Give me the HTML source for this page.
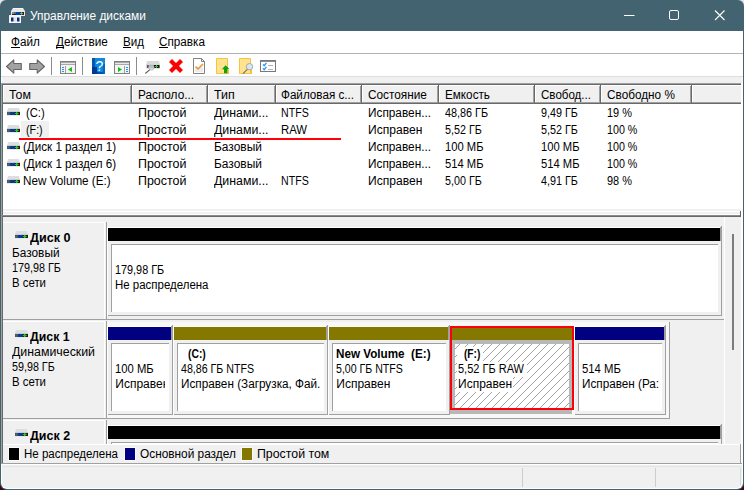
<!DOCTYPE html>
<html lang="ru"><head><meta charset="utf-8"><title>Управление дисками</title>
<style>
html,body{margin:0;padding:0}
body{width:744px;height:490px;overflow:hidden;position:relative;background:#fff;font-family:"Liberation Sans", sans-serif;font-size:12px}
#w{position:absolute;left:0;top:0;width:744px;height:490px;overflow:hidden}
#w>div,#w>svg{position:absolute;display:block}
.t{font-family:"Liberation Sans", sans-serif;font-size:12px;height:14px;line-height:14px;white-space:pre;transform-origin:0 0}
.c{height:14px;overflow:hidden}
u{text-decoration:underline;text-underline-offset:1px}
</style></head><body><div id="w">
<div style="left:0;top:0;width:744px;height:40px;background:#e4e4e4"></div>
<div style="left:0;top:450px;width:744px;height:40px;background:#3a0610"></div>
<div style="left:0;top:0;width:744px;height:490px;background:#446370;border-radius:6px 6px 7px 7px"></div>
<div style="left:1px;top:31px;width:742px;height:458px;background:#fff;border-radius:0 0 6px 6px;"></div>
<div style="left:2px;top:77px;width:740px;height:411px;background:#f0f0f0;border-radius:0 0 5px 5px;"></div>
<svg style="left:9px;top:8px" width="16" height="15" viewBox="0 0 16 15">
<path d="M4 0h10l2 3v5H2V3z" fill="#e4e6e8"/>
<rect x="4" y="0" width="10" height="1" fill="#f4f4f4"/>
<rect x="3" y="4" width="12" height="3" fill="#5a0c14"/>
<rect x="3" y="4" width="2" height="2" fill="#8c8c90"/>
<rect x="5" y="4" width="2" height="2" fill="#2a7c94"/>
<rect x="7" y="4" width="4" height="3" fill="#0a44a0"/>
<rect x="11.500" y="4.500" width="2" height="2" fill="#30e8a0" transform="rotate(45 12.500 5.500)"/>
<rect x="0" y="7" width="12" height="8" rx="0.500" fill="#f4f5f6"/>
<rect x="2" y="9.500" width="2.500" height="4" fill="#0c2c8c"/>
<rect x="8" y="9.500" width="2.500" height="4" fill="#0c2c8c"/>
<rect x="5" y="9" width="2.500" height="5" fill="#e4e4e4"/>
</svg>
<div class="t" style="left:30.00px;top:9px;color:#fff;transform:scaleX(0.9907);">Управление дисками</div>
<svg style="left:600px;top:0" width="144" height="31" viewBox="600 0 144 31">
<path d="M624 15.500h10.500" stroke="#fff" stroke-width="1" fill="none"/>
<rect x="669.500" y="10.500" width="9" height="9" rx="1.500" stroke="#fff" stroke-width="1" fill="none"/>
<path d="M715 10.500l9.500 9.500M724.500 10.500l-9.500 9.500" stroke="#fff" stroke-width="1.100" fill="none"/>
</svg>
<div style="left:1px;top:31px;width:742px;height:22px;background:#fff;"></div>
<div class="t" style="left:11.20px;top:35px;color:#000;transform:scaleX(0.9763);">Файл</div>
<div style="left:11.20px;top:47px;width:8.91px;height:1px;background:#000"></div>
<div class="t" style="left:55.80px;top:35px;color:#000;transform:scaleX(0.9816);">Действие</div>
<div style="left:55.80px;top:47px;width:7.98px;height:1px;background:#000"></div>
<div class="t" style="left:122.90px;top:35px;color:#000;transform:scaleX(0.9674);">Вид</div>
<div style="left:122.90px;top:47px;width:7.74px;height:1px;background:#000"></div>
<div class="t" style="left:159.40px;top:35px;color:#000;transform:scaleX(0.9768);">Справка</div>
<div style="left:159.40px;top:47px;width:8.46px;height:1px;background:#000"></div>
<div style="left:1px;top:53px;width:742px;height:1px;background:#b4b4b4;"></div>
<div style="left:1px;top:54px;width:742px;height:22px;background:#fff;"></div>
<div style="left:1px;top:76px;width:742px;height:1px;background:#dcdfdf;"></div>
<div style="left:51px;top:57px;width:1px;height:18px;background:#8c8c8c;"></div>
<div style="left:82px;top:57px;width:1px;height:18px;background:#8c8c8c;"></div>
<div style="left:136px;top:57px;width:1px;height:18px;background:#8c8c8c;"></div>
<svg style="left:0;top:54px" width="290" height="24" viewBox="0 54 290 24">
<!-- back / forward arrows -->
<path d="M6.500 66.500l7.300-6.700v3.700h7.500v6h-7.500v3.700z" fill="#a2a2a2" stroke="#686262" stroke-width="1.050" stroke-linejoin="round"/>
<path d="M44.500 66.500l-7.300-6.700v3.700h-7.500v6h7.500v3.700z" fill="#a2a2a2" stroke="#686262" stroke-width="1.050" stroke-linejoin="round"/>
<!-- show/hide tree -->
<rect x="60.500" y="61.500" width="15" height="12" fill="#f4f4f4" stroke="#808080"/>
<rect x="61" y="62" width="14" height="3" fill="#a8a8a8"/><rect x="61" y="63" width="14" height="1" fill="#e8e8e8"/>
<rect x="65" y="66" width="1" height="7" fill="#a0a0a0"/>
<rect x="62" y="67" width="2" height="1" fill="#1e90ff"/><rect x="62" y="69" width="2" height="1" fill="#1e90ff"/><rect x="62" y="71" width="2" height="1" fill="#1e90ff"/>
<path d="M72 67v5l-4-2.500z" fill="#10c010"/>
<!-- help -->
<rect x="92" y="58" width="13" height="16" fill="#0c8ae0"/>
<rect x="92" y="58" width="3" height="16" fill="#0458b0"/>
<rect x="92" y="67" width="5" height="7" fill="#003a8c"/><rect x="97" y="72" width="8" height="2" fill="#0050a8"/><rect x="103" y="64" width="2" height="10" fill="#0068c0"/>
<text x="99.500" y="71" font-family="Liberation Sans, sans-serif" font-size="14" fill="#fff" text-anchor="middle">?</text>
<!-- tree right -->
<rect x="114.500" y="61.500" width="15" height="12" fill="#f4f4f4" stroke="#808080"/>
<rect x="115" y="62" width="14" height="3" fill="#a8a8a8"/><rect x="115" y="63" width="14" height="1" fill="#e8e8e8"/>
<rect x="124" y="66" width="1" height="7" fill="#a0a0a0"/>
<rect x="126" y="67" width="2" height="1" fill="#1e90ff"/><rect x="126" y="69" width="2" height="1" fill="#1e90ff"/><rect x="126" y="71" width="2" height="1" fill="#1e90ff"/>
<path d="M118 67v5l4-2.500z" fill="#10c010"/>
<!-- disk with magnifier -->
<path d="M147 61h12l1 4h-14z" fill="#d8dadc"/>
<rect x="146" y="64.500" width="14" height="4" fill="#d0d2d4"/>
<rect x="147" y="65" width="12.500" height="3" fill="#2a0c14"/>
<rect x="147" y="65" width="1.500" height="3" fill="#605858"/>
<rect x="148.500" y="65" width="2" height="3" fill="#a8b0b8"/>
<rect x="150.500" y="65" width="3.500" height="3" fill="#4a7c94"/>
<rect x="156" y="65" width="1" height="3" fill="#10e020"/><rect x="155" y="66" width="3" height="1" fill="#10e020"/>
<circle cx="151.500" cy="67.500" r="2.600" fill="#d0d4d8" fill-opacity="0.800" stroke="#b0b4b8" stroke-width="0.700"/>
<path d="M149.800 69.600L145.300 73.500" stroke="#686060" stroke-width="1.200"/>
<!-- red X -->
<path d="M170.500 60.500l11 11M181.500 60.500l-11 11" stroke="#ff0000" stroke-width="4.200"/>
<!-- doc check -->
<path d="M193.500 58.500h8l3 3v12h-11z" fill="#fff" stroke="#808080"/>
<rect x="195" y="67" width="8" height="5" fill="#ececec"/>
<path d="M201.500 58.500v3h3" fill="none" stroke="#808080"/>
<path d="M195.500 66.500l2.500 2.500l5-5" stroke="#f09030" stroke-width="1.500" fill="none"/>
<!-- yellow + green arrow -->
<path d="M216.500 58.500h11v15h-11z" fill="#ffe38e" stroke="#f7c23c"/>
<rect x="227" y="70" width="2" height="4" fill="#f7c23c"/>
<path d="M225.700 65.300l3.800 4h-2.200v4h-3.300v-4h-2.200z" fill="#10a010"/>
<!-- yellow + magnifier -->
<path d="M239.500 58.500h11v15h-11z" fill="#ffe38e" stroke="#f7c23c"/>
<rect x="250" y="70" width="2" height="4" fill="#f7c23c"/>
<circle cx="249.500" cy="66.700" r="3.200" fill="#d8e6f0" stroke="#a8a8a8" stroke-width="1"/>
<path d="M247.300 69.300l-4.300 4.400" stroke="#7a7068" stroke-width="1.200"/>
<!-- list check -->
<rect x="260.500" y="60.500" width="15" height="11" fill="#fff" stroke="#787878"/>
<rect x="261" y="61" width="14" height="1" fill="#8c8c8c"/>
<path d="M263 64.300l1.200 1.400l2.200-2.800M263 68.300l1.200 1.400l2.200-2.800" stroke="#1e90ff" stroke-width="1.300" fill="none"/>
<path d="M268 65.500h5M268 69.500h5" stroke="#b0b4b8"/>
</svg>
<div style="left:3px;top:85px;width:738px;height:130px;background:#fff;"></div>
<div style="left:1px;top:83px;width:740px;height:1px;background:#a0a0a0;"></div>
<div style="left:1px;top:83px;width:1px;height:381px;background:#a0a0a0;"></div>
<div style="left:2px;top:84px;width:739px;height:1px;background:#696969;"></div>
<div style="left:2px;top:84px;width:1px;height:380px;background:#696969;"></div>
<div style="left:741px;top:83px;width:1px;height:381px;background:#fff;"></div>
<div style="left:3px;top:85px;width:738px;height:17px;background:#f0f0f0;"></div>
<div style="left:3px;top:85px;width:738px;height:1px;background:#fff;"></div>
<div style="left:3px;top:102px;width:738px;height:1px;background:#a0a0a0;"></div>
<div style="left:3px;top:103px;width:738px;height:1px;background:#696969;"></div>
<div style="left:3px;top:85px;width:1px;height:17px;background:#fff;"></div>
<div style="left:130px;top:86px;width:1px;height:17px;background:#a0a0a0;"></div>
<div style="left:131px;top:85px;width:1px;height:19px;background:#696969;"></div>
<div style="left:132px;top:85px;width:1px;height:17px;background:#fff;"></div>
<div style="left:206px;top:86px;width:1px;height:17px;background:#a0a0a0;"></div>
<div style="left:207px;top:85px;width:1px;height:19px;background:#696969;"></div>
<div style="left:208px;top:85px;width:1px;height:17px;background:#fff;"></div>
<div style="left:274px;top:86px;width:1px;height:17px;background:#a0a0a0;"></div>
<div style="left:275px;top:85px;width:1px;height:19px;background:#696969;"></div>
<div style="left:276px;top:85px;width:1px;height:17px;background:#fff;"></div>
<div style="left:360px;top:86px;width:1px;height:17px;background:#a0a0a0;"></div>
<div style="left:361px;top:85px;width:1px;height:19px;background:#696969;"></div>
<div style="left:362px;top:85px;width:1px;height:17px;background:#fff;"></div>
<div style="left:437px;top:86px;width:1px;height:17px;background:#a0a0a0;"></div>
<div style="left:438px;top:85px;width:1px;height:19px;background:#696969;"></div>
<div style="left:439px;top:85px;width:1px;height:17px;background:#fff;"></div>
<div style="left:533px;top:86px;width:1px;height:17px;background:#a0a0a0;"></div>
<div style="left:534px;top:85px;width:1px;height:19px;background:#696969;"></div>
<div style="left:535px;top:85px;width:1px;height:17px;background:#fff;"></div>
<div style="left:599px;top:86px;width:1px;height:17px;background:#a0a0a0;"></div>
<div style="left:600px;top:85px;width:1px;height:19px;background:#696969;"></div>
<div style="left:601px;top:85px;width:1px;height:17px;background:#fff;"></div>
<div style="left:690px;top:86px;width:1px;height:17px;background:#a0a0a0;"></div>
<div style="left:691px;top:85px;width:1px;height:19px;background:#696969;"></div>
<div style="left:692px;top:85px;width:1px;height:17px;background:#fff;"></div>
<div class="t" style="left:9.30px;top:88px;color:#000;transform:scaleX(1.0301);">Том</div>
<div class="t" style="left:137.80px;top:88px;color:#000;transform:scaleX(0.9830);">Располо...</div>
<div class="t" style="left:213.80px;top:88px;color:#000;transform:scaleX(1.0356);">Тип</div>
<div class="t" style="left:281.30px;top:88px;color:#000;transform:scaleX(0.9729);">Файловая с...</div>
<div class="t" style="left:367.80px;top:88px;color:#000;transform:scaleX(0.9833);">Состояние</div>
<div class="t" style="left:444.80px;top:88px;color:#000;transform:scaleX(0.9758);">Емкость</div>
<div class="t" style="left:540.80px;top:88px;color:#000;transform:scaleX(0.9644);">Свобод...</div>
<div class="t" style="left:606.80px;top:88px;color:#000;transform:scaleX(0.9813);">Свободно %</div>
<div style="left:21px;top:121px;width:28px;height:16px;background:#f0f0f0;"></div>
<svg style="left:6.5px;top:108px" width="13" height="8" viewBox="0 0 13 8">
<path d="M1 0h11l1 4H0z" fill="#dcdee0"/><rect x="0" y="3" width="13" height="1" fill="#c8ccd0"/>
<rect x="0" y="4" width="13" height="3" fill="#063c8c"/><rect x="0" y="4" width="3" height="3" fill="#4a5a74"/><rect x="8" y="4" width="5" height="3" fill="#34141c"/>
<rect x="9" y="4" width="1.500" height="3" fill="#18d018"/><rect x="8" y="5" width="3.500" height="1" fill="#18d018"/>
<rect x="0" y="7" width="13" height="1" fill="#e6e8ea"/></svg>
<div class="t" style="left:25.80px;top:106px;color:#000;transform:scaleX(0.9352);">(C:)</div>
<div class="t" style="left:137.80px;top:106px;color:#000;transform:scaleX(1.0368);">Простой</div>
<div class="t" style="left:213.80px;top:106px;color:#000;transform:scaleX(1.0275);">Динами...</div>
<div class="t" style="left:281.30px;top:106px;color:#000;transform:scaleX(0.8842);">NTFS</div>
<div class="t" style="left:367.80px;top:106px;color:#000;transform:scaleX(0.9846);">Исправен...</div>
<div class="t" style="left:444.80px;top:106px;color:#000;transform:scaleX(0.9026);">48,86 ГБ</div>
<div class="t" style="left:540.80px;top:106px;color:#000;transform:scaleX(0.8959);">9,49 ГБ</div>
<div class="t" style="left:606.80px;top:106px;color:#000;transform:scaleX(0.9104);">19 %</div>
<svg style="left:6.5px;top:125px" width="13" height="8" viewBox="0 0 13 8">
<path d="M1 0h11l1 4H0z" fill="#dcdee0"/><rect x="0" y="3" width="13" height="1" fill="#c8ccd0"/>
<rect x="0" y="4" width="13" height="3" fill="#063c8c"/><rect x="0" y="4" width="3" height="3" fill="#4a5a74"/><rect x="8" y="4" width="5" height="3" fill="#34141c"/>
<rect x="9" y="4" width="1.500" height="3" fill="#18d018"/><rect x="8" y="5" width="3.500" height="1" fill="#18d018"/>
<rect x="0" y="7" width="13" height="1" fill="#e6e8ea"/></svg>
<div class="t" style="left:25.80px;top:123px;color:#000;transform:scaleX(0.8950);">(F:)</div>
<div class="t" style="left:137.80px;top:123px;color:#000;transform:scaleX(1.0368);">Простой</div>
<div class="t" style="left:213.80px;top:123px;color:#000;transform:scaleX(1.0275);">Динами...</div>
<div class="t" style="left:281.30px;top:123px;color:#000;transform:scaleX(0.9460);">RAW</div>
<div class="t" style="left:367.80px;top:123px;color:#000;transform:scaleX(1.0059);">Исправен</div>
<div class="t" style="left:444.80px;top:123px;color:#000;transform:scaleX(0.8959);">5,52 ГБ</div>
<div class="t" style="left:540.80px;top:123px;color:#000;transform:scaleX(0.8959);">5,52 ГБ</div>
<div class="t" style="left:606.80px;top:123px;color:#000;transform:scaleX(0.8936);">100 %</div>
<svg style="left:6.5px;top:142px" width="13" height="8" viewBox="0 0 13 8">
<path d="M1 0h11l1 4H0z" fill="#dcdee0"/><rect x="0" y="3" width="13" height="1" fill="#c8ccd0"/>
<rect x="0" y="4" width="13" height="3" fill="#063c8c"/><rect x="0" y="4" width="3" height="3" fill="#4a5a74"/><rect x="8" y="4" width="5" height="3" fill="#34141c"/>
<rect x="9" y="4" width="1.500" height="3" fill="#18d018"/><rect x="8" y="5" width="3.500" height="1" fill="#18d018"/>
<rect x="0" y="7" width="13" height="1" fill="#e6e8ea"/></svg>
<div class="t" style="left:22.80px;top:140px;color:#000;transform:scaleX(0.9693);">(Диск 1 раздел 1)</div>
<div class="t" style="left:137.80px;top:140px;color:#000;transform:scaleX(1.0368);">Простой</div>
<div class="t" style="left:213.80px;top:140px;color:#000;transform:scaleX(0.9946);">Базовый</div>
<div class="t" style="left:367.80px;top:140px;color:#000;transform:scaleX(0.9846);">Исправен...</div>
<div class="t" style="left:444.80px;top:140px;color:#000;transform:scaleX(0.9359);">100 МБ</div>
<div class="t" style="left:540.80px;top:140px;color:#000;transform:scaleX(0.9359);">100 МБ</div>
<div class="t" style="left:606.80px;top:140px;color:#000;transform:scaleX(0.8936);">100 %</div>
<svg style="left:6.5px;top:159px" width="13" height="8" viewBox="0 0 13 8">
<path d="M1 0h11l1 4H0z" fill="#dcdee0"/><rect x="0" y="3" width="13" height="1" fill="#c8ccd0"/>
<rect x="0" y="4" width="13" height="3" fill="#063c8c"/><rect x="0" y="4" width="3" height="3" fill="#4a5a74"/><rect x="8" y="4" width="5" height="3" fill="#34141c"/>
<rect x="9" y="4" width="1.500" height="3" fill="#18d018"/><rect x="8" y="5" width="3.500" height="1" fill="#18d018"/>
<rect x="0" y="7" width="13" height="1" fill="#e6e8ea"/></svg>
<div class="t" style="left:22.80px;top:157px;color:#000;transform:scaleX(0.9693);">(Диск 1 раздел 6)</div>
<div class="t" style="left:137.80px;top:157px;color:#000;transform:scaleX(1.0368);">Простой</div>
<div class="t" style="left:213.80px;top:157px;color:#000;transform:scaleX(0.9946);">Базовый</div>
<div class="t" style="left:367.80px;top:157px;color:#000;transform:scaleX(0.9846);">Исправен...</div>
<div class="t" style="left:444.80px;top:157px;color:#000;transform:scaleX(0.9359);">514 МБ</div>
<div class="t" style="left:540.80px;top:157px;color:#000;transform:scaleX(0.9359);">514 МБ</div>
<div class="t" style="left:606.80px;top:157px;color:#000;transform:scaleX(0.8936);">100 %</div>
<svg style="left:6.5px;top:176px" width="13" height="8" viewBox="0 0 13 8">
<path d="M1 0h11l1 4H0z" fill="#dcdee0"/><rect x="0" y="3" width="13" height="1" fill="#c8ccd0"/>
<rect x="0" y="4" width="13" height="3" fill="#063c8c"/><rect x="0" y="4" width="3" height="3" fill="#4a5a74"/><rect x="8" y="4" width="5" height="3" fill="#34141c"/>
<rect x="9" y="4" width="1.500" height="3" fill="#18d018"/><rect x="8" y="5" width="3.500" height="1" fill="#18d018"/>
<rect x="0" y="7" width="13" height="1" fill="#e6e8ea"/></svg>
<div class="t" style="left:22.80px;top:174px;color:#000;transform:scaleX(0.9741);">New Volume (E:)</div>
<div class="t" style="left:137.80px;top:174px;color:#000;transform:scaleX(1.0368);">Простой</div>
<div class="t" style="left:213.80px;top:174px;color:#000;transform:scaleX(1.0275);">Динами...</div>
<div class="t" style="left:281.30px;top:174px;color:#000;transform:scaleX(0.8842);">NTFS</div>
<div class="t" style="left:367.80px;top:174px;color:#000;transform:scaleX(1.0059);">Исправен</div>
<div class="t" style="left:444.80px;top:174px;color:#000;transform:scaleX(0.8959);">5,00 ГБ</div>
<div class="t" style="left:540.80px;top:174px;color:#000;transform:scaleX(0.8959);">4,91 ГБ</div>
<div class="t" style="left:606.80px;top:174px;color:#000;transform:scaleX(0.9104);">98 %</div>
<div style="left:19px;top:138px;width:322px;height:2px;background:#ff0008;"></div>
<div style="left:3px;top:209px;width:738px;height:6px;background:#f0f0f0;"></div>
<div style="left:3px;top:211px;width:738px;height:1px;background:#fff;"></div>
<div style="left:3px;top:214px;width:738px;height:1px;background:#fff;"></div>
<div style="left:1px;top:215px;width:740px;height:1px;background:#8e8a8a;"></div>
<div style="left:2px;top:216px;width:739px;height:1px;background:#696969;"></div>
<div style="left:740px;top:211px;width:1px;height:6px;background:#696969;"></div>
<div style="left:3px;top:222px;width:101px;height:1px;background:#fff;"></div>
<div style="left:104px;top:222px;width:1px;height:97px;background:#fff;"></div>
<div style="left:106px;top:222px;width:1px;height:98px;background:#a0a0a0;"></div>
<div style="left:3px;top:319px;width:721px;height:1px;background:#a0a0a0;"></div>
<svg style="left:14.5px;top:231px" width="13" height="8" viewBox="0 0 13 8">
<path d="M1 0h11l1 4H0z" fill="#dcdee0"/><rect x="0" y="3" width="13" height="1" fill="#c8ccd0"/>
<rect x="0" y="4" width="13" height="3" fill="#063c8c"/><rect x="0" y="4" width="3" height="3" fill="#4a5a74"/><rect x="8" y="4" width="5" height="3" fill="#34141c"/>
<rect x="9" y="4" width="1.500" height="3" fill="#18d018"/><rect x="8" y="5" width="3.500" height="1" fill="#18d018"/>
<rect x="0" y="7" width="13" height="1" fill="#e6e8ea"/></svg>
<div class="t" style="left:30.00px;top:231px;color:#000;font-weight:bold;transform:scaleX(1.0503);">Диск 0</div>
<div class="t" style="left:12.30px;top:246px;color:#000;transform:scaleX(0.9862);">Базовый</div>
<div class="t" style="left:12.30px;top:261px;color:#000;transform:scaleX(0.8985);">179,98 ГБ</div>
<div class="t" style="left:12.30px;top:276px;color:#000;transform:scaleX(0.9485);">В сети</div>
<div style="left:107px;top:227px;width:614px;height:89px;background:#fff;"></div>
<div style="left:108px;top:241px;width:613px;height:74px;background:#f0f0f0;"></div>
<div style="left:108px;top:228px;width:612px;height:13px;background:#000;"></div>
<div style="left:720px;top:227px;width:1px;height:14px;background:#a0a0a0;"></div>
<div style="left:721px;top:226px;width:1px;height:90px;background:#a0a0a0;"></div>
<div style="left:108px;top:315px;width:614px;height:1px;background:#a0a0a0;"></div>
<div style="left:112px;top:245px;width:606px;height:67px;background:#fff;"></div>
<div style="left:111px;top:244px;width:607px;height:1px;background:#a0a0a0;"></div>
<div style="left:111px;top:244px;width:1px;height:68px;background:#a0a0a0;"></div>
<div class="t" style="left:115.30px;top:263px;color:#000;transform:scaleX(0.9040);">179,98 ГБ</div>
<div class="t" style="left:115.30px;top:278px;color:#000;transform:scaleX(0.9554);">Не распределена</div>
<div style="left:3px;top:321px;width:101px;height:1px;background:#fff;"></div>
<div style="left:104px;top:321px;width:1px;height:97px;background:#fff;"></div>
<div style="left:106px;top:321px;width:1px;height:98px;background:#a0a0a0;"></div>
<div style="left:3px;top:418px;width:667px;height:1px;background:#a0a0a0;"></div>
<div style="left:669px;top:322px;width:1px;height:97px;background:#a0a0a0;"></div>
<div style="left:107px;top:322px;width:562px;height:96px;background:#f8f8f8;"></div>
<svg style="left:14.5px;top:330px" width="13" height="8" viewBox="0 0 13 8">
<path d="M1 0h11l1 4H0z" fill="#dcdee0"/><rect x="0" y="3" width="13" height="1" fill="#c8ccd0"/>
<rect x="0" y="4" width="13" height="3" fill="#063c8c"/><rect x="0" y="4" width="3" height="3" fill="#4a5a74"/><rect x="8" y="4" width="5" height="3" fill="#34141c"/>
<rect x="9" y="4" width="1.500" height="3" fill="#18d018"/><rect x="8" y="5" width="3.500" height="1" fill="#18d018"/>
<rect x="0" y="7" width="13" height="1" fill="#e6e8ea"/></svg>
<div class="t" style="left:30.00px;top:330px;color:#000;font-weight:bold;transform:scaleX(1.0247);">Диск 1</div>
<div class="t" style="left:12.30px;top:345px;color:#000;transform:scaleX(1.0292);">Динамический</div>
<div class="t" style="left:12.30px;top:360px;color:#000;transform:scaleX(0.8943);">59,98 ГБ</div>
<div class="t" style="left:12.30px;top:375px;color:#000;transform:scaleX(0.9485);">В сети</div>
<div style="left:107px;top:326px;width:65px;height:89px;background:#fff;"></div>
<div style="left:108px;top:340px;width:64px;height:74px;background:#f0f0f0;"></div>
<div style="left:108px;top:327px;width:63px;height:13px;background:#000080;"></div>
<div style="left:171px;top:326px;width:1px;height:14px;background:#a0a0a0;"></div>
<div style="left:172px;top:325px;width:1px;height:90px;background:#a0a0a0;"></div>
<div style="left:108px;top:414px;width:65px;height:1px;background:#a0a0a0;"></div>
<div style="left:112px;top:344px;width:57px;height:67px;background:#fff;"></div>
<div style="left:111px;top:343px;width:58px;height:1px;background:#a0a0a0;"></div>
<div style="left:111px;top:343px;width:1px;height:68px;background:#a0a0a0;"></div>
<div class="c" style="left:115.30px;top:362px;width:49.70px"><div class="t" style="position:relative;left:0;top:0;color:#000;transform:scaleX(0.9383);">100 МБ</div></div>
<div class="c" style="left:115.30px;top:377px;width:49.70px"><div class="t" style="position:relative;left:0;top:0;color:#000;">Исправен</div></div>
<div style="left:173px;top:326px;width:154px;height:89px;background:#fff;"></div>
<div style="left:174px;top:340px;width:153px;height:74px;background:#f0f0f0;"></div>
<div style="left:174px;top:327px;width:152px;height:13px;background:#857800;"></div>
<div style="left:326px;top:326px;width:1px;height:14px;background:#a0a0a0;"></div>
<div style="left:327px;top:325px;width:1px;height:90px;background:#a0a0a0;"></div>
<div style="left:174px;top:414px;width:154px;height:1px;background:#a0a0a0;"></div>
<div style="left:178px;top:344px;width:146px;height:67px;background:#fff;"></div>
<div style="left:177px;top:343px;width:147px;height:1px;background:#a0a0a0;"></div>
<div style="left:177px;top:343px;width:1px;height:68px;background:#a0a0a0;"></div>
<div class="t" style="left:188.00px;top:347px;color:#000;font-weight:bold;transform:scaleX(0.8616);">(C:)</div>
<div class="t" style="left:181.05px;top:362px;color:#000;transform:scaleX(0.8866);">48,86 ГБ NTFS</div>
<div class="t" style="left:181.05px;top:377px;color:#000;transform:scaleX(0.9790);">Исправен (Загрузка, Фай.</div>
<div style="left:328px;top:326px;width:121px;height:89px;background:#fff;"></div>
<div style="left:329px;top:340px;width:120px;height:74px;background:#f0f0f0;"></div>
<div style="left:329px;top:327px;width:119px;height:13px;background:#857800;"></div>
<div style="left:448px;top:326px;width:1px;height:14px;background:#a0a0a0;"></div>
<div style="left:449px;top:325px;width:1px;height:90px;background:#a0a0a0;"></div>
<div style="left:329px;top:414px;width:121px;height:1px;background:#a0a0a0;"></div>
<div style="left:333px;top:344px;width:113px;height:67px;background:#fff;"></div>
<div style="left:332px;top:343px;width:114px;height:1px;background:#a0a0a0;"></div>
<div style="left:332px;top:343px;width:1px;height:68px;background:#a0a0a0;"></div>
<div class="t" style="left:336.30px;top:347px;color:#000;font-weight:bold;transform:scaleX(0.9735);">New Volume &nbsp;(E:)</div>
<div class="t" style="left:336.30px;top:362px;color:#000;transform:scaleX(0.8822);">5,00 ГБ NTFS</div>
<div class="t" style="left:336.30px;top:377px;color:#000;">Исправен</div>
<div style="left:450px;top:326px;width:124px;height:88px;background:#b8b8b8;"></div>
<div style="left:572px;top:410px;width:2px;height:4px;background:#fff;"></div>
<div style="left:452px;top:328px;width:120px;height:12px;background:#857800;"></div>
<svg style="left:455px;top:344px" width="114" height="64" viewBox="455 344 114 64"><defs><pattern id="hb" width="8" height="8" patternUnits="userSpaceOnUse"><path d="M-1 5L5 -1M3 9L9 3" stroke="#8c8c8c" stroke-width="0.800" fill="none"/></pattern></defs><rect x="455" y="344" width="114" height="64" fill="#fff"/><rect x="455" y="344" width="114" height="64" fill="url(#hb)"/></svg>
<div style="left:457px;top:347px;width:25.5px;height:15px;background:#fff;"></div>
<div style="left:457px;top:362px;width:69.5px;height:15px;background:#fff;"></div>
<div style="left:457px;top:377px;width:56.25px;height:15px;background:#fff;"></div>
<div style="left:450px;top:326px;width:124px;height:84px;border:2px solid #ff0008;box-sizing:border-box;z-index:3"></div>
<div class="t" style="left:464.30px;top:347px;color:#000;font-weight:bold;transform:scaleX(0.8436);">(F:)</div>
<div class="t" style="left:458.05px;top:362px;color:#000;transform:scaleX(0.9164);">5,52 ГБ RAW</div>
<div class="t" style="left:458.05px;top:377px;color:#000;">Исправен</div>
<div style="left:574px;top:326px;width:91px;height:89px;background:#fff;"></div>
<div style="left:575px;top:340px;width:90px;height:74px;background:#f0f0f0;"></div>
<div style="left:575px;top:327px;width:89px;height:13px;background:#000080;"></div>
<div style="left:664px;top:326px;width:1px;height:14px;background:#a0a0a0;"></div>
<div style="left:665px;top:325px;width:1px;height:90px;background:#a0a0a0;"></div>
<div style="left:575px;top:414px;width:91px;height:1px;background:#a0a0a0;"></div>
<div style="left:579px;top:344px;width:83px;height:67px;background:#fff;"></div>
<div style="left:578px;top:343px;width:84px;height:1px;background:#a0a0a0;"></div>
<div style="left:578px;top:343px;width:1px;height:68px;background:#a0a0a0;"></div>
<div class="c" style="left:582.30px;top:362px;width:76.70px"><div class="t" style="position:relative;left:0;top:0;color:#000;transform:scaleX(0.9431);">514 МБ</div></div>
<div class="c" style="left:582.30px;top:377px;width:76.70px"><div class="t" style="position:relative;left:0;top:0;color:#000;transform:scaleX(0.9768);">Исправен (Ра:</div></div>
<div style="left:3px;top:420px;width:101px;height:1px;background:#fff;"></div>
<div style="left:104px;top:420px;width:1px;height:24px;background:#fff;"></div>
<div style="left:106px;top:420px;width:1px;height:24px;background:#a0a0a0;"></div>
<svg style="left:14.5px;top:429px" width="13" height="8" viewBox="0 0 13 8">
<path d="M1 0h11l1 4H0z" fill="#dcdee0"/><rect x="0" y="3" width="13" height="1" fill="#c8ccd0"/>
<rect x="0" y="4" width="13" height="3" fill="#063c8c"/><rect x="0" y="4" width="3" height="3" fill="#4a5a74"/><rect x="8" y="4" width="5" height="3" fill="#34141c"/>
<rect x="9" y="4" width="1.500" height="3" fill="#18d018"/><rect x="8" y="5" width="3.500" height="1" fill="#18d018"/>
<rect x="0" y="7" width="13" height="1" fill="#e6e8ea"/></svg>
<div class="t" style="left:30.00px;top:429px;color:#000;font-weight:bold;transform:scaleX(1.0375);">Диск 2</div>
<div style="left:107px;top:425px;width:614px;height:20px;background:#fff;"></div>
<div style="left:108px;top:439px;width:613px;height:5px;background:#f0f0f0;"></div>
<div style="left:108px;top:426px;width:612px;height:13px;background:#000;"></div>
<div style="left:720px;top:425px;width:1px;height:14px;background:#a0a0a0;"></div>
<div style="left:721px;top:424px;width:1px;height:20px;background:#a0a0a0;"></div>
<div style="left:111px;top:442px;width:607px;height:1px;background:#a0a0a0;"></div>
<div style="left:111px;top:442px;width:1px;height:2px;background:#a0a0a0;"></div>
<div style="left:112px;top:443px;width:606px;height:1px;background:#fff;"></div>
<div style="left:724px;top:217px;width:1px;height:227px;background:#fff;"></div>
<div style="left:732px;top:234px;width:2px;height:116px;background:#7c7c7c;"></div>
<div style="left:3px;top:444px;width:738px;height:19px;background:#f0f0f0;"></div>
<div style="left:3px;top:444px;width:738px;height:1px;background:#fff;"></div>
<div style="left:1px;top:463px;width:741px;height:1px;background:#a0a0a0;"></div>
<div style="left:740px;top:444px;width:1px;height:20px;background:#a0a0a0;"></div>
<div style="left:8px;top:447px;width:12px;height:14px;background:#fafafa;"></div>
<div style="left:9px;top:448px;width:10px;height:12px;background:#000;"></div>
<div class="t" style="left:24.30px;top:447px;color:#000;transform:scaleX(0.9604);">Не распределена</div>
<div style="left:124px;top:447px;width:12px;height:14px;background:#fafafa;"></div>
<div style="left:125px;top:448px;width:10px;height:12px;background:#000080;"></div>
<div class="t" style="left:140.30px;top:447px;color:#000;transform:scaleX(0.9869);">Основной раздел</div>
<div style="left:241px;top:447px;width:12px;height:14px;background:#fafafa;"></div>
<div style="left:242px;top:448px;width:10px;height:12px;background:#857800;"></div>
<div class="t" style="left:257.30px;top:447px;color:#000;transform:scaleX(1.0281);">Простой том</div>
<div style="left:1px;top:464px;width:742px;height:1px;background:#fff;"></div>
<div style="left:2px;top:466px;width:740px;height:1px;background:#e2e5e8;"></div>
<div style="left:522px;top:468px;width:1px;height:19px;background:#cdcdcd;"></div>
<div style="left:655px;top:468px;width:1px;height:19px;background:#cdcdcd;"></div>
<div style="left:740px;top:468px;width:1px;height:17px;background:#d6dadc;"></div>
</div></body></html>
